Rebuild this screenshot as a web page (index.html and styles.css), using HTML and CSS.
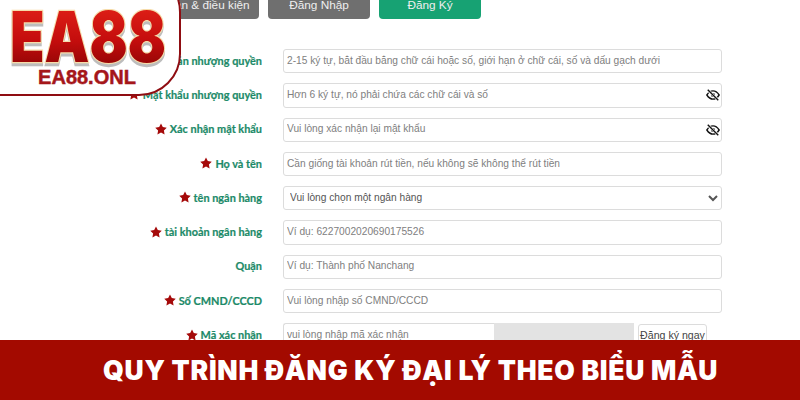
FILE: index.html
```html
<!DOCTYPE html>
<html lang="en">

<head>
    <meta charset="UTF-8">
    <meta name="viewport" content="width=device-width, initial-scale=1.0">
    <title>Quy trinh dang ky dai ly</title>

    <link rel="stylesheet" href="styles.css">

</head>

<body>
    <svg class="defs" width="0" height="0">
        <symbol id="star" viewBox="0 0 24 24">
            <polygon points="12,1 15.6,8.2 23.5,9.3 17.8,15 19.2,23 12,19.2 4.8,23 6.2,15 0.5,9.3 8.4,8.2" />
        </symbol>
        <symbol id="eye-off" viewBox="0 0 24 20">
            <path d="M1.5 10 C5 4.5 8.5 3 12 3 C15.5 3 19 4.5 22.5 10 C19 15.5 15.5 17 12 17 C8.5 17 5 15.5 1.5 10 Z" fill="none" stroke="#111" stroke-width="2.4" />
            <circle cx="12" cy="10" r="3.6" fill="#111" />
            <path d="M3 1.5 L21 18.5" stroke="#fff" stroke-width="4.6" />
            <path d="M3 1 L21 19" stroke="#111" stroke-width="2.4" />
        </symbol>
        <linearGradient id="logo-red" x1="0" y1="0" x2="0" y2="1">
            <stop offset="0" stop-color="#e8261a" />
            <stop offset="0.55" stop-color="#c40d0d" />
            <stop offset="1" stop-color="#7c0202" />
        </linearGradient>
    </svg>

    <main class="page">
        <nav class="tabs">
            <a class="tab tab-terms">Điều khoản &amp; điều kiện</a>
            <a class="tab tab-login">Đăng Nhập</a>
            <a class="tab tab-register">Đăng Ký</a>
        </nav>

        <form class="form">
            <div class="row">
                <label><svg class="star"><use href="#star" /></svg>Tài khoản nhượng quyền</label>
                <input type="text" placeholder="2-15 ký tự, bắt đầu bằng chữ cái hoặc số, giới hạn ở chữ cái, số và dấu gạch dưới">
            </div>
            <div class="row">
                <label><svg class="star"><use href="#star" /></svg>Mật khẩu nhượng quyền</label>
                <div class="field">
                    <input type="text" placeholder="Hơn 6 ký tự, nó phải chứa các chữ cái và số">
                    <svg class="eye"><use href="#eye-off" /></svg>
                </div>
            </div>
            <div class="row">
                <label><svg class="star"><use href="#star" /></svg>Xác nhận mật khẩu</label>
                <div class="field">
                    <input type="text" placeholder="Vui lòng xác nhận lại mật khẩu">
                    <svg class="eye"><use href="#eye-off" /></svg>
                </div>
            </div>
            <div class="row">
                <label><svg class="star"><use href="#star" /></svg>Họ và tên</label>
                <input type="text" placeholder="Cần giống tài khoản rút tiền, nếu không sẽ không thể rút tiền">
            </div>
            <div class="row">
                <label><svg class="star"><use href="#star" /></svg>tên ngân hàng</label>
                <select>
                    <option>Vui lòng chọn một ngân hàng</option>
                </select>
            </div>
            <div class="row">
                <label><svg class="star"><use href="#star" /></svg>tài khoản ngân hàng</label>
                <input type="text" placeholder="Ví dụ: 6227002020690175526">
            </div>
            <div class="row">
                <label>Quận</label>
                <input type="text" placeholder="Ví dụ: Thành phố Nanchang">
            </div>
            <div class="row">
                <label><svg class="star"><use href="#star" /></svg>Số CMND/CCCD</label>
                <input type="text" placeholder="Vui lòng nhập số CMND/CCCD">
            </div>
            <div class="row">
                <label><svg class="star"><use href="#star" /></svg>Mã xác nhận</label>
                <div class="captcha">
                    <input type="text" placeholder="vui lòng nhập mã xác nhận">
                    <div class="captcha-img"></div>
                    <button type="button">Đăng ký ngay</button>
                </div>
            </div>
        </form>
    </main>

    <div class="logo">
        <svg class="logo-big" width="162" height="62" viewBox="0 0 162 62">
            <text x="2" y="53" textLength="156" lengthAdjust="spacingAndGlyphs">EA88</text>
        </svg>
        <p class="logo-small">EA88.ONL</p>
    </div>

    <div class="banner">
        <h1>Quy trình đăng ký đại lý theo biểu mẫu</h1>
    </div>
</body>

</html>
```

FILE: styles.css
```css
* {
    margin: 0;
    padding: 0;
    box-sizing: border-box;
}

:root {
    --red: #a30a00;
    --green: #1c8a68;
    --line: #dcdcdc;
}

body {
    position: relative;
    width: 800px;
    height: 400px;
    overflow: hidden;
    background-color: #fff;
    font-family: 'Liberation Sans', Arial, sans-serif;
}

.defs {
    position: absolute;
}

.tabs {
    display: flex;
    justify-content: flex-end;
    gap: 9px;
    width: 481px;
    margin-top: -9px;
}

.tab {
    height: 28px;
    line-height: 28px;
    border-radius: 4px;
    background-color: #6f6f6f;
    color: #eee;
    font-size: 11.8px;
    text-align: center;
    white-space: nowrap;
}

.tab-terms {
    width: 140px;
}

.tab-login {
    width: 102px;
}

.tab-register {
    width: 102px;
    background-color: #17a273;
}

.form {
    display: flex;
    flex-direction: column;
    gap: 10px;
    margin-top: 30px;
}

.row {
    display: grid;
    grid-template-columns: 262px 439px;
    column-gap: 21px;
    align-items: center;
    height: 24.3px;
}

label {
    display: flex;
    justify-content: flex-end;
    align-items: center;
    gap: 3px;
    padding-bottom: 2px;
    color: var(--green);
    -webkit-text-stroke: 0.2px var(--green);
    font-family: Lato, sans-serif;
    font-size: 10.9px;
    font-weight: 700;
    white-space: nowrap;
}

.star {
    width: 12px;
    height: 12px;
    fill: #a50a0a;
}

input,
select {
    width: 100%;
    height: 24.3px;
    padding: 0 3px 2px;
    border: 1px solid var(--line);
    border-radius: 3px;
    background-color: #fff;
    font-family: 'Liberation Sans', Arial, sans-serif;
    font-size: 10.2px;
    outline: none;
}

input::placeholder {
    color: #808080;
    opacity: 1;
}

select {
    padding-left: 2px;
    color: #555;
}

.field {
    position: relative;
}

.eye {
    position: absolute;
    top: 6px;
    right: 2px;
    width: 14px;
    height: 12px;
}

.captcha {
    display: flex;
    align-items: flex-start;
}

.captcha input {
    width: 211px;
    border-right: none;
    border-radius: 3px 0 0 3px;
}

.captcha-img {
    width: 140px;
    height: 24px;
    background-color: #e3e3e3;
}

.captcha button {
    width: 69px;
    height: 22px;
    margin: 1px 0 0 4px;
    border: 1px solid var(--line);
    border-radius: 3px;
    background-color: #fff;
    color: #444;
    font-family: 'Liberation Sans', Arial, sans-serif;
    font-size: 10.6px;
    white-space: nowrap;
}

.logo {
    position: absolute;
    top: -30px;
    left: -24px;
    width: 205px;
    height: 126px;
    padding: 37px 0 0 30px;
    background-color: #fff;
    border: 2.5px solid #8f0d12;
    border-radius: 0 42px 42px 24px;
}

.logo-big {
    display: block;
    filter: drop-shadow(0 3px 0 #bdbdbd);
}

.logo-big text {
    fill: url(#logo-red);
    stroke: #f6dcaa;
    stroke-width: 2.5px;
    paint-order: stroke;
    font-family: Inter, sans-serif;
    font-size: 70px;
    font-weight: 900;
}

.logo-small {
    width: 158px;
    margin-top: -4px;
    color: #a5161a;
    -webkit-text-stroke: 0.5px #a5161a;
    font-family: 'Liberation Sans', Arial, sans-serif;
    font-size: 20px;
    font-weight: 700;
    line-height: 20px;
    text-align: center;
}

.banner {
    position: absolute;
    left: 0;
    bottom: 0;
    width: 100%;
    height: 60px;
    padding-left: 103px;
    display: flex;
    align-items: center;
    background-color: var(--red);
}

h1 {
    color: #fff;
    font-family: Inter, sans-serif;
    font-size: 26.5px;
    font-weight: 900;
    line-height: 1;
    letter-spacing: 0.7px;
    text-transform: uppercase;
    white-space: nowrap;
}
```
